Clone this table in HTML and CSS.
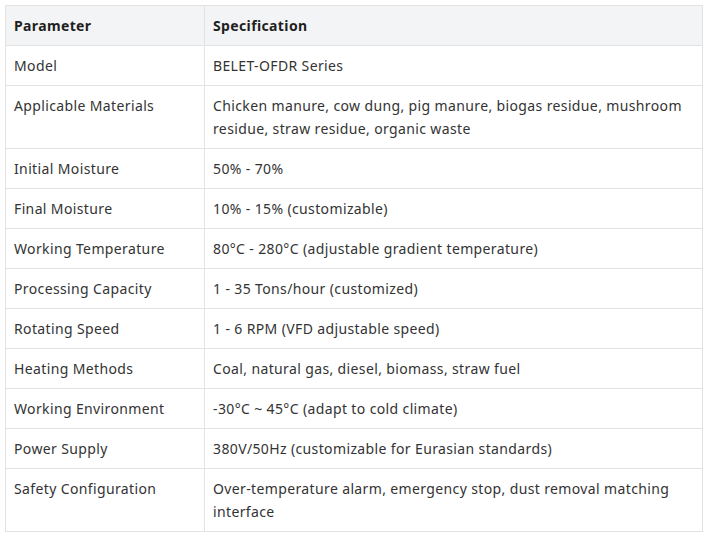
FILE: index.html
```html
<!DOCTYPE html>
<html>
<head>
<meta charset="utf-8">
<link rel="stylesheet" href="styles.css">
</head>
<body>
<table class="spec">
  <thead>
    <tr><th class="c1">Parameter</th><th>Specification</th></tr>
  </thead>
  <tbody>
    <tr><td>Model</td><td>BELET-OFDR Series</td></tr>
    <tr><td>Applicable Materials</td><td>Chicken manure, cow dung, pig manure, biogas residue, mushroom residue, straw residue, organic waste</td></tr>
    <tr><td>Initial Moisture</td><td>50% - 70%</td></tr>
    <tr><td>Final Moisture</td><td>10% - 15% (customizable)</td></tr>
    <tr><td>Working Temperature</td><td>80°C - 280°C (adjustable gradient temperature)</td></tr>
    <tr><td>Processing Capacity</td><td>1 - 35 Tons/hour (customized)</td></tr>
    <tr><td>Rotating Speed</td><td>1 - 6 RPM (VFD adjustable speed)</td></tr>
    <tr><td>Heating Methods</td><td>Coal, natural gas, diesel, biomass, straw fuel</td></tr>
    <tr><td>Working Environment</td><td>-30°C ~ 45°C (adapt to cold climate)</td></tr>
    <tr><td>Power Supply</td><td>380V/50Hz (customizable for Eurasian standards)</td></tr>
    <tr><td>Safety Configuration</td><td>Over-temperature alarm, emergency stop, dust removal matching interface</td></tr>
  </tbody>
</table>
</body>
</html>
```
FILE: styles.css
```css
html, body {
  margin: 0;
  padding: 0;
  background: #ffffff;
}
body {
  padding: 5px;
  font-family: "Noto Sans", "Open Sans", sans-serif;
  font-size: 14px;
  letter-spacing: 0.37px;
  color: #333333;
}
.spec {
  width: 698px;
  border-collapse: collapse;
  table-layout: fixed;
}
.spec .c1 {
  width: 182px;
}
.spec th,
.spec td {
  border: 1px solid #e3e3e3;
  padding: 8px 8px;
  line-height: 23px;
  text-align: left;
  vertical-align: top;
}
.spec th {
  background: #f3f4f5;
  font-weight: 700;
  color: #1f1f1f;
}
```
